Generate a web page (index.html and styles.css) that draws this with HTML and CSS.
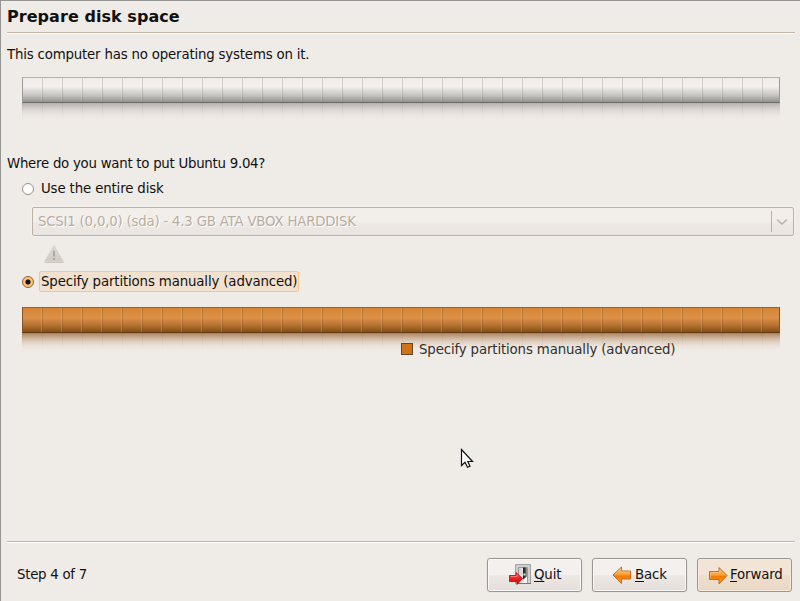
FILE: index.html
```html
<!DOCTYPE html>
<html lang="en">
<head>
<meta charset="utf-8">
<title>Install</title>
<link rel="stylesheet" href="styles.css">
</head>
<body>
<main class="window">
  <h1 class="title">Prepare disk space</h1>
  <p class="line intro">This computer has no operating systems on it.</p>
  <div class="disk disk-grey"><div class="bar"></div><div class="reflection"></div></div>
  <p class="line question">Where do you want to put Ubuntu 9.04?</p>
  <div class="option first"><span class="radio"></span><span class="option-label">Use the entire disk</span></div>
  <div class="combo"><span class="combo-text">SCSI1 (0,0,0) (sda) - 4.3 GB ATA VBOX HARDDISK</span><span class="combo-arrow"><svg width="12" height="8" viewBox="0 0 12 8"><path d="M1 1.500 6 6 11 1.500" fill="none" stroke="#bcb0a4" stroke-width="1.5"/></svg></span></div>
  <div class="warning"><svg width="22" height="20" viewBox="0 0 22 20"><defs><linearGradient id="w" x2="0" y2="1"><stop stop-color="#dedad5"/><stop offset="1" stop-color="#cfcac4"/></linearGradient></defs><path d="M11 1.500 20.300 17.500H1.700Z" fill="url(#w)" stroke="#d6d1cb" stroke-linejoin="round"/><path d="M1.500 18.500h19" stroke="#cdc8c1"/><path d="M11 6.500v6M11 14v2" stroke="#aaa69f" stroke-width="1.8"/></svg></div>
  <div class="option second"><span class="radio checked"></span><span class="option-label focused">Specify partitions manually (advanced)</span></div>
  <div class="disk disk-orange"><div class="bar"></div><div class="reflection"></div></div>
  <div class="legend"><span class="swatch"></span><span class="legend-text">Specify partitions manually (advanced)</span></div>
  <footer class="footer">
    <span class="step">Step 4 of 7</span>
    <div class="buttons">
      <button class="button quit"><svg width="24" height="24" viewBox="0 0 24 24"><defs><linearGradient id="d" x2="1"><stop stop-color="#222"/><stop offset=".5" stop-color="#333"/><stop offset="1" stop-color="#aaa"/></linearGradient><linearGradient id="p" x2="1"><stop stop-color="#ccc"/><stop offset="1" stop-color="#fff"/></linearGradient><linearGradient id="r" x2="0" y2="1"><stop stop-color="#ff5b5b"/><stop offset=".5" stop-color="#ef2020"/><stop offset="1" stop-color="#dc0000"/></linearGradient></defs><path d="M7.500 1.500h15v19h-15Z" fill="#cfcfcf" stroke="#a2a2a2"/><path d="M10.500 4.500h9v16h-9Z" fill="url(#p)" stroke="#999"/><path d="M15 4.500h4v9l-4 3Z" fill="url(#d)"/><path d="M9 20.500h14" stroke="#777"/><circle cx="16.500" cy="11.500" r="1.200" fill="#eee" stroke="#666" stroke-width=".6"/><path d="M1.500 12.500H8V9.500L14.500 15.500 9 21.500V18.500H1.500Z" fill="url(#r)" stroke="#a80d0d" stroke-width=".8" stroke-linejoin="round"/><path d="M2.500 13.500H9v-2" fill="none" stroke="#ff9090" stroke-width=".7"/></svg><span class="text"><u>Q</u>uit</span></button>
      <button class="button back"><svg width="20" height="20" viewBox="0 0 20 20"><defs><linearGradient id="o" x2="0" y2="1"><stop stop-color="#ffc36c"/><stop offset=".45" stop-color="#fba13a"/><stop offset=".55" stop-color="#f57900"/><stop offset="1" stop-color="#ffa02c"/></linearGradient></defs><path d="M1 10 9.500 2V6h9v8h-9v4.500Z" fill="url(#o)" stroke="#ba6420" stroke-width=".9" stroke-linejoin="round"/><path d="M3 9.500 8.700 4.200V7h9" fill="none" stroke="#ffc98a" stroke-width=".6"/></svg><span class="text"><u>B</u>ack</span></button>
      <button class="button forward"><svg width="20" height="20" viewBox="0 0 20 20"><path d="M19 10.500 11 2.500V6.500H1.500v8h9.500v4.500Z" fill="url(#o)" stroke="#ba6420" stroke-width=".9" stroke-linejoin="round"/><path d="M2.500 13.500V7.500h9V5" fill="none" stroke="#ffc98a" stroke-width=".6"/></svg><span class="text"><u>F</u>orward</span></button>
    </div>
  </footer>
  <svg class="pointer" width="14" height="21" viewBox="0 0 14 21"><path d="M1.500 1.500V17.500L5 14.200 7.500 19.300 10 18.200 7.800 13.500H12.500Z" fill="#fff" stroke="#111" stroke-width="1.200"/></svg>
</main>
</body>
</html>
```
FILE: styles.css
```css
* { box-sizing: border-box; }
body { margin: 0; background: #efebe6; color: #111; font: 13.33px/20px "DejaVu Sans", sans-serif; }
.window { position: relative; width: 800px; height: 601px; overflow: hidden; display: flex; flex-direction: column; padding: 0 5px 0 6px; border-left: 1px solid #979494; border-top: 1px solid #979494; white-space: nowrap; }
.title { margin: 0; height: 33px; padding-top: 6px; font-size: 16px; line-height: 20px; letter-spacing: .05px; border-bottom: 1px solid #fff; box-shadow: inset 0 -1px #c4b5a5; }
.line { margin: 0; height: 20px; }
.intro { margin-top: 11px; letter-spacing: -.18px; }
.disk { width: 758px; margin-left: 15px; }
.bar { height: 26px; border: 1px solid; }
.reflection { height: 17px; -webkit-mask-image: linear-gradient(#000, transparent); mask-image: linear-gradient(#000, transparent); }
.disk-grey { margin-top: 12px; }
.disk-grey .bar { border-color: #b4b1ae #9d9b99 #6f6c69; background: repeating-linear-gradient(90deg, transparent 0 18px, #ffffff28 18px 19px, #6e6a6640 19px 20px), linear-gradient(#efebe8, #f4f0ed 35%, #c8c7c3 70%, #92918c); }
.disk-grey .reflection { background: repeating-linear-gradient(90deg, #77777728 0 1px, transparent 1px 20px), linear-gradient(#b3aead, #efebe6); }
.question { margin-top: 34px; letter-spacing: -.26px; }
.option { display: flex; align-items: center; height: 22px; padding-left: 15px; }
.first { margin-top: 3px; letter-spacing: -.14px; }
.radio { flex: none; width: 12px; height: 12px; margin-top: 1px; border: 1px solid #968f87; border-radius: 50%; background: #fff; }
.checked { border-color: #8a6337; background: radial-gradient(circle, #171717 0 2.2px, #ffc376 3px 5px); }
.option-label { height: 21px; line-height: 19px; padding: 0 1px; margin-left: 5px; border: 1px solid transparent; border-radius: 2px; }
.option-label.focused { border-color: #fbc786; background: #f2e1cf; width: 260px; letter-spacing: -.14px; }
.combo { display: flex; align-items: center; width: 762px; height: 29px; margin: 8px 0 0 25px; padding-left: 5px; border: 1px solid #bdb2a7; border-radius: 2px; background: linear-gradient(#f2eee9 50%, #eeeae5 50%, #e9e4df); color: #b9aca0; text-shadow: 1px 1px #fff; box-shadow: 0 0 0 1px #f4f1ed; }
.combo-text { letter-spacing: -.21px; }
.combo-arrow { display: flex; align-items: center; height: 21px; margin-left: auto; width: 22px; padding-left: 4px; border-left: 1px solid #bdb2a7; }
.warning { height: 20px; margin: 8px 0 0 36px; }
.warning svg { display: block; }
.second { margin-top: 6px; }
.disk-orange { margin-top: 15px; }
.disk-orange .bar { border-color: #9f602a #8c5320 #613713; background: repeating-linear-gradient(90deg, transparent 0 18px, #ffd0a040 18px 19px, #70401850 19px 20px), linear-gradient(#d58432, #dc9148 40%, #b87431 70%, #874e16); }
.disk-orange .reflection { background: repeating-linear-gradient(90deg, #8c532028 0 1px, transparent 1px 20px), linear-gradient(#a97f59, #efdfcf); }
.legend { position: relative; display: flex; align-items: center; height: 20px; margin: -11px 0 0 394px; color: #303030; letter-spacing: -.14px; }
.legend-text { margin-top: 1px; }
.swatch { width: 12px; height: 12px; border: 1px solid #62472c; background: #d07318; margin-right: 6px; }
.footer { display: flex; align-items: flex-start; justify-content: space-between; height: 60px; margin-top: auto; padding: 16px 3px 0 10px; border-top: 1px solid #c4b5a5; box-shadow: inset 0 1px #fff; }
.step { margin-top: 7px; letter-spacing: -.26px; }
.buttons { display: flex; gap: 10px; }
.button { display: flex; align-items: center; width: 95px; height: 34px; padding: 0; border: 1px solid #9c9690; border-radius: 3px; background: linear-gradient(#f3f0ed 50%, #ece8e4 50%, #e4dfda); box-shadow: inset 0 0 0 1px #faf8f6, 0 0 0 1px #eae5df; color: #111; font: inherit; letter-spacing: -.15px; }
.button svg { flex: none; }
.text { margin-top: -1px; }
.quit { padding-left: 20px; }
.quit .text { margin-left: 2px; }
.back { padding-left: 19px; }
.back .text { margin-left: 3px; }
.forward { padding-left: 10px; background: linear-gradient(#f2e5d6 50%, #eddfcd 50%, #ead8c3); box-shadow: inset 0 0 0 1px #f6eadc; }
.forward .text { margin-left: 2px; }
u { text-decoration-thickness: 1px; text-underline-offset: 2px; }
.pointer { position: absolute; left: 459px; top: 447px; }
```
